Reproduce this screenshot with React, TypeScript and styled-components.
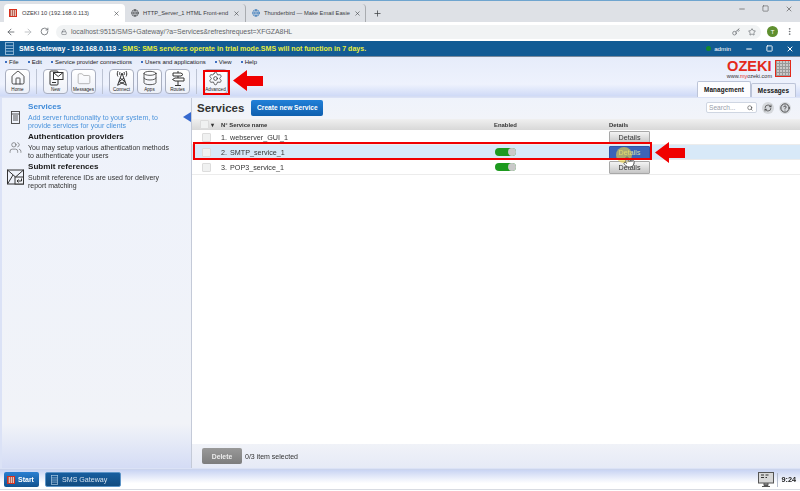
import React from "react";
import styled, { createGlobalStyle } from "styled-components";
import { ArrowLeft, ArrowRight, RotateCw, Lock, Key, Star, MoreVertical, Plus, X, Minus, Square, Globe, Home, Folder, Database, Settings, Users, Search, RefreshCw, HelpCircle, Pointer } from "lucide-react";

const GlobalStyle = createGlobalStyle`
  html, body { margin: 0; padding: 0; background: #fff; }
  * { box-sizing: border-box; }
  body { font-family: "Liberation Sans", Arial, sans-serif; }
`;

const Page = styled.div`
  position: relative;
  width: 800px;
  height: 491px;
  overflow: hidden;
  display: flex;
  flex-direction: column;
  border-top: 1px solid #6fa5cf;
  filter: blur(0.35px);
`;

const TabStrip = styled.div`
  height: 21px;
  background: #dee1e6;
  display: flex;
  align-items: flex-end;
  padding-left: 4px;
  color: #3c4043;
`;

const Tab = styled.div<{ $active?: boolean; $w: number }>`
  width: ${(p) => p.$w}px;
  height: 18px;
  padding: 0 5px 0 ${(p) => (p.$active ? 5 : 6)}px;
  background: ${(p) => (p.$active ? "#fff" : "transparent")};
  border-radius: 4px 4px 0 0;
  border-right: ${(p) => (p.$active ? "none" : "1px solid #a9acb0")};
  display: flex;
  align-items: center;
  gap: 4px;
  font-size: 5.75px;
  white-space: nowrap;
  svg { flex: none; }
`;

const TabTitle = styled.span`
  flex: 1;
  line-height: 10px;
`;

const OzekiIcon = styled.span`
  width: 8px;
  height: 8px;
  flex: none;
  margin-right: 1px;
  background: repeating-linear-gradient(90deg, #b9685c 0 1px, #e8c0b4 1px 2px);
  border: 1px solid #d8301e;
`;

const WindowButtons = styled.div`
  margin-left: auto;
  align-self: flex-start;
  height: 15px;
  display: flex;
  align-items: center;
  gap: 16px;
  padding-right: 7px;
  color: #555;
`;

const AddressBar = styled.div`
  height: 19px;
  background: #fff;
  display: flex;
  align-items: center;
  padding: 0 6px 0 6px;
  gap: 7px;
  color: #5f6368;
`;

const UrlField = styled.div`
  flex: 1;
  height: 14px;
  margin-right: -1px;
  background: #f1f3f4;
  border-radius: 7px;
  display: flex;
  align-items: center;
  padding: 0 5px;
  gap: 4px;
  font-size: 6.9px;
  color: #5f6368;
`;

const Avatar = styled.span`
  width: 11px;
  height: 11px;
  border-radius: 50%;
  background: #5f8f2f;
  color: #fff;
  font-size: 6px;
  display: flex;
  align-items: center;
  justify-content: center;
`;

const TitleBar = styled.div`
  height: 16px;
  background: #125b94;
  border-bottom: 1px solid #79899c;
  color: #fff;
  display: flex;
  align-items: center;
  padding: 0 6px 0 5px;
  font-size: 7.05px;
  font-weight: bold;
`;

const TrialText = styled.span`
  color: #e8ef3c;
  margin-left: 2px;
`;

const AdminBox = styled.div`
  margin-left: auto;
  display: flex;
  align-items: center;
  gap: 3px;
  font-size: 6.2px;
  font-weight: normal;
`;

const OnlineDot = styled.span`
  width: 5px;
  height: 5px;
  border-radius: 50%;
  background: #11882c;
`;

const AppHead = styled.div`
  height: 40px;
  background: linear-gradient(#e6ecfa 0, #eef2fd 70%, #cfdaf7 100%);
  position: relative;
  border-bottom: 1px solid #d5ddf3;
`;

const MenuBar = styled.div`
  height: 9px;
  display: flex;
  align-items: center;
  gap: 9px;
  padding-left: 5px;
  font-size: 6px;
  color: #222;
`;

const MenuItem = styled.span`
  &::before {
    content: "";
    display: inline-block;
    width: 2px;
    height: 2px;
    margin: 0 2px 1px 0;
    background: #3d6fc0;
  }
`;

const ToolRow = styled.div`
  display: flex;
  align-items: flex-start;
  padding: 3px 0 0 5px;
  gap: 3px;
`;

const ToolButton = styled.div`
  width: 25px;
  height: 25px;
  border: 1px solid #a9afc0;
  border-radius: 4px;
  background: linear-gradient(#fff, #edf0f8);
  display: flex;
  flex-direction: column;
  align-items: center;
  justify-content: flex-end;
  padding-bottom: 1px;
  font-size: 4.6px;
  color: #222;
  svg { margin-bottom: 1px; color: #333; }
`;

const ToolDivider = styled.span`
  width: 1px;
  height: 25px;
  background: #bcc3d3;
  margin: 0 3px;
`;

const Brand = styled.div`
  position: absolute;
  right: 9px;
  top: 3px;
  display: flex;
  gap: 3px;
`;

const BrandText = styled.div`
  display: flex;
  flex-direction: column;
  align-items: center;
`;

const BrandName = styled.span`
  color: #e3291b;
  font-size: 14.6px;
  font-weight: bold;
  line-height: 13px;
`;

const BrandUrl = styled.span`
  font-size: 5.5px;
  line-height: 6px;
  color: #333;
  b { color: #e3291b; font-weight: normal; }
`;

const BrandGrid = styled.span`
  width: 16px;
  height: 17px;
  border: 1.5px solid #e3291b;
  background: repeating-linear-gradient(90deg, #999 0 1px, transparent 1px 3px),
    repeating-linear-gradient(0deg, #999 0 1px, #c9c9c9 1px 3px);
`;

const Tabs = styled.div`
  position: absolute;
  right: 4px;
  bottom: -1px;
  display: flex;
  align-items: flex-end;
`;

const HeadTab = styled.div<{ $active?: boolean }>`
  height: ${(p) => (p.$active ? 16 : 14)}px;
  width: ${(p) => (p.$active ? 54 : 45)}px;
  background: ${(p) => (p.$active ? "#fdfdff" : "#eef1fa")};
  border: 1px solid #bcc4d8;
  border-bottom: none;
  border-radius: 2px 2px 0 0;
  color: #111;
  font-size: 6.4px;
  font-weight: bold;
  display: flex;
  align-items: center;
  justify-content: center;
  letter-spacing: 0.1px;
`;

const Body = styled.div`
  flex: 1;
  display: flex;
  min-height: 0;
  background: #dbe2f6;
  padding: 1px 0 1px 2px;
`;

const Sidebar = styled.div`
  width: 190px;
  background: linear-gradient(#eef2fb 0, #f1f3f8 88%, #d4dcf5 100%);
  border-right: 1px solid #c4cad8;
  position: relative;
  padding-top: 3px;
`;

const SideItem = styled.div`
  display: flex;
  height: 30px;
`;

const SideIcon = styled.div`
  width: 26px;
  flex: none;
  display: flex;
  align-items: center;
  justify-content: center;
  padding-top: 2px;
  color: #444;
`;

const SideTitle = styled.div<{ $active?: boolean }>`
  font-size: 8.1px;
  font-weight: bold;
  line-height: 11px;
  margin-bottom: 1.5px;
  color: ${(p) => (p.$active ? "#3f8ad8" : "#1a1a1a")};
`;

const SideDesc = styled.div<{ $active?: boolean }>`
  font-size: 7px;
  line-height: 8.2px;
  color: ${(p) => (p.$active ? "#4a93dc" : "#333")};
`;

const SideArrow = styled.span`
  position: absolute;
  right: 0;
  top: 14px;
  border: 5px solid transparent;
  border-left: none;
  border-right: 8px solid #3569cf;
`;

const Main = styled.div`
  flex: 1;
  display: flex;
  flex-direction: column;
  min-width: 0;
`;

const MainHead = styled.div`
  height: 21px;
  background: linear-gradient(#eff3fb, #f2f4f9);
  display: flex;
  align-items: center;
  padding: 0 9px 2px 5px;
  gap: 7px;
`;

const MainTitle = styled.h1`
  margin: 0;
  font-size: 11.5px;
  font-weight: bold;
  color: #333;
`;

const BlueButton = styled.button`
  width: 72px;
  height: 16px;
  padding: 0;
  border: none;
  border-radius: 2px;
  background: linear-gradient(#2180d8, #0f5fae);
  color: #fff;
  font: bold 6.6px "Liberation Sans", Arial, sans-serif;
`;

const HeadTools = styled.div`
  margin-left: auto;
  display: flex;
  align-items: center;
  gap: 5px;
  color: #333;
`;

const SearchBox = styled.div`
  width: 51px;
  height: 11px;
  background: #fff;
  border: 1px solid #cfd6e2;
  border-radius: 2px;
  display: flex;
  align-items: center;
  justify-content: space-between;
  padding: 0 3px 0 2px;
  font-size: 6.6px;
  color: #98a0ac;
`;

const RoundTool = styled.span`
  width: 12px;
  height: 12px;
  border-radius: 50%;
  background: #d5d8dc;
  display: flex;
  align-items: center;
  justify-content: center;
`;

const HeaderRow = styled.div`
  height: 11px;
  display: grid;
  grid-template-columns: 29px 273px 115px 1fr;
  align-items: center;
  background: linear-gradient(#f0f0f0, #d8d8d8);
  font-size: 5.9px;
  font-weight: bold;
  color: #333;
`;

const HeadCheck = styled.div`
  display: flex;
  align-items: center;
  gap: 2px;
  padding-left: 8px;
  font-size: 6px;
`;

const Check = styled.span`
  width: 9px;
  height: 9px;
  background: #f0f1f1;
  border: 1px solid #dcdcdc;
  border-radius: 1px;
`;

const TableArea = styled.div`
  flex: 1;
  background: #fff;
`;

const Row = styled.div<{ $selected?: boolean }>`
  height: 15px;
  display: grid;
  grid-template-columns: 29px 273px 115px 1fr;
  align-items: center;
  background: ${(p) => (p.$selected ? "#d8e9f8" : "#fff")};
  border-bottom: 1px solid #ececec;
  font-size: 7.2px;
  color: #333;
`;

const CheckCell = styled.div`
  padding-left: 10px;
  display: flex;
`;

const NameCell = styled.div`
  display: flex;
  gap: 3px;
  white-space: nowrap;
`;

const Toggle = styled.span`
  display: block;
  width: 21px;
  height: 8px;
  margin-left: 1px;
  border-radius: 4px;
  background: #1d9a1f;
  position: relative;
  &::after {
    content: "";
    position: absolute;
    right: 0;
    top: 0;
    width: 8px;
    height: 8px;
    border-radius: 50%;
    background: #c9c9c9;
  }
`;

const DetailsButton = styled.button<{ $hover?: boolean }>`
  position: relative;
  z-index: ${(p) => (p.$hover ? 2 : 1)};
  width: 41px;
  height: 13px;
  padding: 0;
  border: 1px solid ${(p) => (p.$hover ? "#2f55a8" : "#a8a8a8")};
  border-radius: 1px;
  background: ${(p) => (p.$hover ? "#3c64b8" : "linear-gradient(#f4f4f4, #c6c6c6)")};
  color: ${(p) => (p.$hover ? "#cfe0a8" : "#333")};
  font: 7.2px "Liberation Sans", Arial, sans-serif;
`;

const CursorHalo = styled.span`
  position: absolute;
  left: 616px;
  top: 146px;
  width: 16px;
  height: 16px;
  border-radius: 50%;
  background: rgba(240, 215, 70, 0.6);
  z-index: 3;
`;

const CursorHand = styled.span`
  position: absolute;
  left: 623px;
  top: 155px;
  z-index: 4;
  display: flex;
  color: #222;
  svg { fill: #fff; }
`;

const Footer = styled.div`
  height: 24px;
  background: linear-gradient(#f0f2f8, #e6eaf6);
  display: flex;
  align-items: center;
  padding: 0 0 0 10px;
  gap: 3px;
  font-size: 7px;
  color: #333;
`;

const DeleteButton = styled.button`
  width: 40px;
  height: 16px;
  padding: 0;
  border: none;
  border-radius: 2px;
  background: linear-gradient(#999, #7d7d7d);
  color: #ececec;
  font: bold 6.8px "Liberation Sans", Arial, sans-serif;
`;

const Taskbar = styled.div`
  height: 21px;
  margin-bottom: 1px;
  background: linear-gradient(#c9d4f3, #fff 70%);
  border-top: 1px solid #cbd4ec;
  border-bottom: 1px solid #d8dbe2;
  display: flex;
  align-items: center;
  padding: 0 4px 0 4px;
  gap: 6px;
`;

const StartButton = styled.div`
  width: 35px;
  height: 15px;
  border-radius: 2px;
  background: linear-gradient(#2a7fd2, #12528f);
  color: #fff;
  font-size: 7px;
  font-weight: bold;
  display: flex;
  align-items: center;
  gap: 2px;
  padding-left: 3px;
`;

const TaskButton = styled.div`
  width: 76px;
  height: 15px;
  border-radius: 2px;
  background: linear-gradient(#175d9f, #124c80);
  border: 1px solid #5b93c6;
  color: #d2e0ee;
  font-size: 7.1px;
  display: flex;
  align-items: center;
  gap: 4px;
  padding-left: 5px;
`;

const Clock = styled.div`
  margin-left: auto;
  display: flex;
  align-items: center;
  gap: 3px;
  font-size: 7.3px;
  font-weight: bold;
  color: #222;
`;

const ClockDivider = styled.span`
  width: 1px;
  height: 14px;
  background: #b4bccc;
`;

const RedFrame = styled.div<{ $l: number; $t: number; $w: number; $h: number }>`
  position: absolute;
  left: ${(p) => p.$l}px;
  top: ${(p) => p.$t}px;
  width: ${(p) => p.$w}px;
  height: ${(p) => p.$h}px;
  border: 2px solid #f00000;
  z-index: 5;
`;

const RedArrow = styled.svg<{ $l: number; $t: number }>`
  position: absolute;
  left: ${(p) => p.$l}px;
  top: ${(p) => p.$t}px;
  z-index: 5;
`;

const Arrow = ({ l, t }: { l: number; t: number }) => (
  <RedArrow $l={l} $t={t} width="30" height="21" viewBox="0 0 30 21">
    <path d="M0 10.5 L14 0 V6 H30 V16 H14 V21 Z" fill="#f00000" />
  </RedArrow>
);

const GatewayIcon = ({ color, size }: { color: string; size: number }) => (
  <svg width={size * 0.7} height={size} viewBox="0 0 10 14" fill="none" stroke={color} strokeWidth="1">
    <rect x="0.5" y="0.5" width="9" height="13" />
    <path d="M0.5 4 H9.5 M0.5 7 H9.5 M0.5 10 H9.5" />
  </svg>
);

const NewIcon = () => (
  <svg width="16" height="16" viewBox="0 0 16 16" fill="none" stroke="#333" strokeWidth="1">
    <rect x="2" y="1" width="8" height="14" rx="1" />
    <rect x="5.5" y="2.5" width="9.5" height="7" fill="#fff" />
    <path d="M5.5 2.5 L10.2 6.5 L15 2.5" />
    <path d="M4 12.5 H8" />
  </svg>
);

const TowerIcon = () => (
  <svg width="16" height="16" viewBox="0 0 16 16" fill="none" stroke="#333" strokeWidth="1">
    <path d="M8 3 L3.5 15.5 M8 3 L12.5 15.5 M6 8 L11 11.5 M10 8 L5 11.5 M5 11.5 L12 15 M11 11.5 L4 15" />
    <path d="M4 1 C3 3 3 5 4 6.5 M12 1 C13 3 13 5 12 6.5 M6 2 C5.5 3 5.5 4 6 5 M10 2 C10.5 3 10.5 4 10 5" />
  </svg>
);

const RoutesIcon = () => (
  <svg width="16" height="16" viewBox="0 0 16 16" fill="none" stroke="#333" strokeWidth="1">
    <path d="M8 1 V15.5 M5 15.5 H11" />
    <path d="M3 3 H11 L13 4.5 L11 6 H3 Z" fill="#fff" />
    <path d="M14 8 H5 L2.5 9.5 L5 11 H14 Z" fill="#fff" />
  </svg>
);

const ServiceDocIcon = () => (
  <svg width="9" height="13" viewBox="0 0 9 13" fill="none" stroke="#444" strokeWidth="0.9">
    <rect x="0.5" y="0.5" width="8" height="12" />
    <path d="M0.5 3 H8.5 M2 5 H7 M2 7 H7 M2 9 H7" />
  </svg>
);

const SubmitIcon = () => (
  <svg width="17" height="16" viewBox="0 0 17 16" fill="none" stroke="#333" strokeWidth="1">
    <rect x="0.5" y="1" width="16" height="14" />
    <path d="M0.5 1 L8.5 8 L16.5 1 M0.5 15 L6 6 " />
    <rect x="8" y="8" width="8.5" height="7" fill="#f1f3f8" />
    <path d="M14.5 9.5 V12 H10 M11.5 10.5 L10 12 L11.5 13.5" />
  </svg>
);

const TrayIcon = () => (
  <svg width="16" height="15" viewBox="0 0 16 15">
    <rect x="0.5" y="0.5" width="15" height="10.5" fill="#d8d8d8" stroke="#555" />
    <path d="M3 3 H6 M7.5 3 H10.5 M3 5.5 H6 M7.5 5.5 H9" stroke="#333" />
    <path d="M6 11 V13.5 H10 V11 M4 14.5 H12" stroke="#555" fill="#777" />
  </svg>
);

const services = [
  { id: 1, name: "webserver_GUI_1", enabled: false },
  { id: 2, name: "SMTP_service_1", enabled: true },
  { id: 3, name: "POP3_service_1", enabled: true },
];

const App: React.FC = () => {
  return (
    <Page>
      <GlobalStyle />
      <TabStrip>
        <Tab $active $w={121}>
          <OzekiIcon />
          <TabTitle>OZEKI 10 (192.168.0.113)</TabTitle>
          <X size={7} />
        </Tab>
        <Tab $w={121}>
          <Globe size={8} />
          <TabTitle>HTTP_Server_1 HTML Front-end</TabTitle>
          <X size={7} />
        </Tab>
        <Tab $w={120}>
          <Globe size={8} color="#2a6fb5" />
          <TabTitle>Thunderbird — Make Email Easie</TabTitle>
          <X size={7} />
        </Tab>
        <Plus size={9} style={{ margin: "0 0 4px 7px" }} />
        <WindowButtons>
          <Minus size={8} />
          <Square size={7} />
          <X size={8} />
        </WindowButtons>
      </TabStrip>
      <AddressBar>
        <ArrowLeft size={10} />
        <ArrowRight size={10} color="#b5b8bc" />
        <RotateCw size={9} />
        <UrlField>
          <Lock size={6} />
          <span>localhost:9515/SMS+Gateway/?a=Services&refreshrequest=XFGZA8HL</span>
          <Key size={8} style={{ marginLeft: "auto", marginRight: 4 }} />
          <Star size={8} />
        </UrlField>
        <Avatar>T</Avatar>
        <MoreVertical size={9} />
      </AddressBar>
      <TitleBar>
        <GatewayIcon color="#9cc0de" size={13} />
        <span style={{ marginLeft: 5 }}>SMS Gateway - 192.168.0.113 -</span>
        <TrialText>SMS: SMS services operate in trial mode.SMS will not function in 7 days.</TrialText>
        <AdminBox>
          <OnlineDot />
          admin
          <Minus size={8} strokeWidth={3} style={{ marginLeft: 11 }} />
          <Square size={7} strokeWidth={3} style={{ marginLeft: 10 }} />
          <X size={8} strokeWidth={3} style={{ marginLeft: 10 }} />
        </AdminBox>
      </TitleBar>
      <AppHead>
        <MenuBar>
          {["File", "Edit", "Service provider connections", "Users and applications", "View", "Help"].map((m) => (
            <MenuItem key={m}>{m}</MenuItem>
          ))}
        </MenuBar>
        <ToolRow>
          <ToolButton><Home size={16} strokeWidth={1.3} />Home</ToolButton>
          <ToolDivider />
          <ToolButton><NewIcon />New</ToolButton>
          <ToolButton><Folder size={14} strokeWidth={1} color="#888" />Messages</ToolButton>
          <ToolDivider />
          <ToolButton><TowerIcon />Connect</ToolButton>
          <ToolButton><Database size={16} strokeWidth={1.2} />Apps</ToolButton>
          <ToolButton><RoutesIcon />Routes</ToolButton>
          <ToolDivider />
          <ToolButton><Settings size={15} strokeWidth={1.2} />Advanced</ToolButton>
        </ToolRow>
        <Brand>
          <BrandText>
            <BrandName>OZEKI</BrandName>
            <BrandUrl>www.<b>my</b>ozeki.com</BrandUrl>
          </BrandText>
          <BrandGrid />
        </Brand>
        <Tabs>
          <HeadTab $active>Management</HeadTab>
          <HeadTab>Messages</HeadTab>
        </Tabs>
      </AppHead>
      <Body>
        <Sidebar>
          <SideItem>
            <SideIcon><ServiceDocIcon /></SideIcon>
            <div>
              <SideTitle $active>Services</SideTitle>
              <SideDesc $active>Add server functionality to your system, to<br />provide services for your clients</SideDesc>
            </div>
          </SideItem>
          <SideItem>
            <SideIcon><Users size={13} strokeWidth={1} /></SideIcon>
            <div>
              <SideTitle>Authentication providers</SideTitle>
              <SideDesc>You may setup various athentication methods<br />to authenticate your users</SideDesc>
            </div>
          </SideItem>
          <SideItem>
            <SideIcon><SubmitIcon /></SideIcon>
            <div>
              <SideTitle>Submit references</SideTitle>
              <SideDesc>Submit reference IDs are used for delivery<br />report matching</SideDesc>
            </div>
          </SideItem>
          <SideArrow />
        </Sidebar>
        <Main>
          <MainHead>
            <MainTitle>Services</MainTitle>
            <BlueButton>Create new Service</BlueButton>
            <HeadTools>
              <SearchBox>Search...<Search size={6} color="#222" /></SearchBox>
              <RoundTool><RefreshCw size={8} /></RoundTool>
              <RoundTool><HelpCircle size={10} /></RoundTool>
            </HeadTools>
          </MainHead>
          <HeaderRow>
            <HeadCheck><Check />▾</HeadCheck>
            <span>N° Service name</span>
            <span>Enabled</span>
            <span>Details</span>
          </HeaderRow>
          <TableArea>
            {services.map((s) => (
              <Row key={s.id} $selected={s.id === 2}>
                <CheckCell><Check /></CheckCell>
                <NameCell><span>{s.id}.</span><span>{s.name}</span></NameCell>
                <div>{s.enabled && <Toggle />}</div>
                <div><DetailsButton $hover={s.id === 2}>Details</DetailsButton></div>
              </Row>
            ))}
          </TableArea>
          <Footer>
            <DeleteButton>Delete</DeleteButton>
            <span>0/3 item selected</span>
          </Footer>
        </Main>
      </Body>
      <Taskbar>
        <StartButton><OzekiIcon />Start</StartButton>
        <TaskButton><GatewayIcon color="#a9c6e0" size={10} />SMS Gateway</TaskButton>
        <Clock>
          <TrayIcon />
          <ClockDivider />
          9:24
        </Clock>
      </Taskbar>
      <RedFrame $l={203} $t={69} $w={27} $h={25} />
      <Arrow l={233} t={69} />
      <RedFrame $l={193} $t={141} $w={459} $h={18} />
      <Arrow l={655} t={141} />
      <CursorHalo />
      <CursorHand><Pointer size={12} strokeWidth={1.3} /></CursorHand>
    </Page>
  );
};

export default App;
